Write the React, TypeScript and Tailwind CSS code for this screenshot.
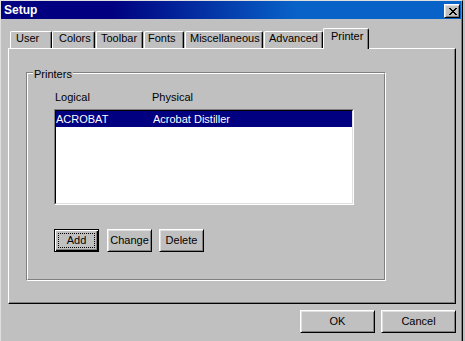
import React from "react";

const tabs = [
  { label: "User", cls: "w-[42px] ml-0 pl-[5px]" },
  { label: "Colors", cls: "w-[43px] ml-0 pl-[6px]" },
  { label: "Toolbar", cls: "w-[47px] ml-[1px] pl-[4px]" },
  { label: "Fonts", cls: "w-[40px] ml-[1px] pl-[3px]" },
  { label: "Miscellaneous", cls: "w-[78px] ml-[1px] pl-[4px]" },
  { label: "Advanced", cls: "w-[59px] ml-[1px] pl-[4px]" },
];

const btn =
  "flex items-center justify-center border border-t-white border-l-white border-r-black border-b-black shadow-[inset_1px_1px_#dfdfdf,inset_-1px_-1px_#808080] bg-[#c0c0c0] leading-[13px] pb-[1px]";

function CloseX() {
  return (
    <svg width="8" height="7" viewBox="0 0 8 7" shapeRendering="crispEdges">
      <path
        d="M0 0h2v1h-2z M6 0h2v1h-2z M1 1h2v1h-2z M5 1h2v1h-2z M2 2h4v1h-4z M3 3h2v1h-2z M2 4h4v1h-4z M1 5h2v1h-2z M5 5h2v1h-2z M0 6h2v1h-2z M6 6h2v1h-2z"
        fill="black"
      />
    </svg>
  );
}

export default function App() {
  return (
    <div className="w-[465px] h-[341px] bg-[#c0c0c0] overflow-hidden font-['Liberation_Sans',Arial,sans-serif] text-[11px] text-black">
      <div className="w-[463px] h-[341px] border border-t-[#dfdfdf] border-l-[#dfdfdf] border-r-black border-b-0 shadow-[inset_-1px_0_#808080] flex flex-col">
        {/* Title bar */}
        <div className="h-[18px] mr-[1px] flex items-start justify-between pl-[3px] pr-[1px] bg-[linear-gradient(90deg,#000080_24%,#0862c8_64%)]">
          <span className="mt-[2px] text-[12px] leading-[14px] font-bold text-white">Setup</span>
          <div className="mt-[3px] w-[16px] h-[14px] flex items-center justify-center border border-t-white border-l-white border-r-black border-b-black shadow-[inset_1px_1px_#dfdfdf,inset_-1px_-1px_#808080] bg-[#c0c0c0] pl-[1px]">
            <CloseX />
          </div>
        </div>

        {/* Body */}
        <div className="flex flex-col pl-[7px] pt-[9px]">
          {/* Tab strip */}
          <div className="h-[20px] flex items-end pl-[2px]">
            {tabs.map((t) => (
              <div
                key={t.label}
                className={`${t.cls} h-[17px] border border-b-0 border-t-white border-l-white border-r-black rounded-tl-[2px] rounded-tr-[2px] shadow-[inset_-1px_0_#808080] leading-[13px] whitespace-nowrap`}
              >
                {t.label}
              </div>
            ))}
            <div className="relative z-10 -mb-px w-[46px] h-[21px] border border-b-0 border-t-white border-l-white border-r-black rounded-tl-[2px] rounded-tr-[2px] shadow-[inset_-1px_0_#808080] bg-[#c0c0c0] pl-[7px] pt-[1px] leading-[13px]">
              Printer
            </div>
          </div>

          {/* Panel */}
          <div className="w-[448px] h-[256px] border border-t-white border-l-white border-r-black border-b-black shadow-[inset_-1px_-1px_#808080] pl-[17px] pt-[23px]">
            {/* Group box */}
            <div className="relative w-[360px] h-[209px] border border-t-[#808080] border-l-[#808080] border-r-white border-b-white">
              <div className="h-full border border-t-white border-l-white border-r-[#808080] border-b-[#808080] pl-[26px] pt-[17px]">
                <div className="flex h-[13px] leading-[13px]">
                  <div className="w-[98px] pl-[1px]">Logical</div>
                  <div>Physical</div>
                </div>
                <div className="mt-[5px] w-[300px] h-[96px] border border-t-[#808080] border-l-[#808080] border-r-white border-b-white">
                  <div className="h-full border border-t-black border-l-black border-r-[#dfdfdf] border-b-[#dfdfdf] bg-white">
                    <div className="flex h-[16px] leading-[16px] bg-[#000080] text-white">
                      <div className="w-[97px]">ACROBAT</div>
                      <div>Acrobat Distiller</div>
                    </div>
                  </div>
                </div>
                <div className="mt-[24px] flex">
                  <div className="w-[45px] h-[23px] flex border border-black shadow-[inset_1px_1px_#fff,inset_-1px_-1px_#000,inset_-2px_-2px_#808080] bg-[#c0c0c0]">
                    <div className="m-[3px] flex-1 flex items-center justify-center border border-dotted border-black leading-[13px] pb-[1px]">
                      Add
                    </div>
                  </div>
                  <div className={`${btn} ml-[8px] w-[45px] h-[23px]`}>Change</div>
                  <div className={`${btn} ml-[7px] w-[45px] h-[23px]`}>Delete</div>
                </div>
              </div>
              <div className="absolute left-[6px] top-[-5px] px-[1px] bg-[#c0c0c0] leading-[13px]">
                Printers
              </div>
            </div>
          </div>

          {/* Dialog buttons */}
          <div className="w-[448px] mt-[6px] flex justify-end gap-[6px]">
            <div className={`${btn} w-[75px] h-[23px]`}>OK</div>
            <div className={`${btn} w-[75px] h-[23px]`}>Cancel</div>
          </div>
        </div>
      </div>
    </div>
  );
}
